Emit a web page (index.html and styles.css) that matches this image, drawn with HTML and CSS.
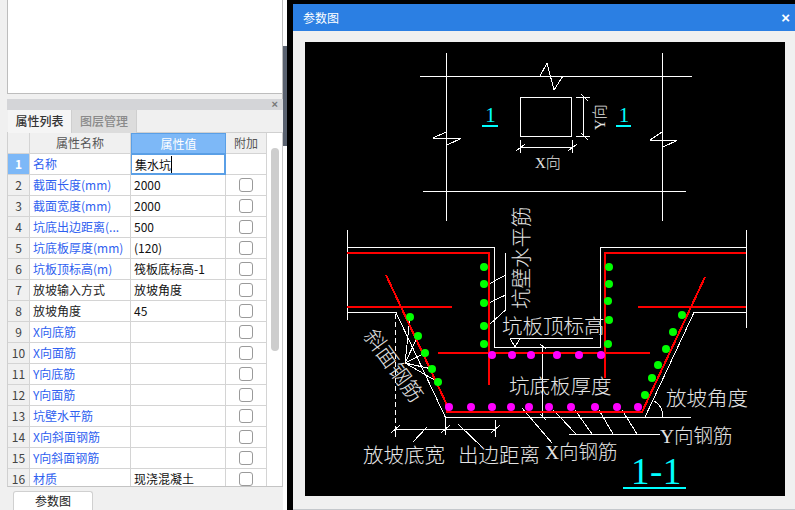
FILE: index.html
```html
<!DOCTYPE html>
<html lang="zh">
<head>
<meta charset="utf-8">
<title>参数图</title>
<link rel="stylesheet" href="styles.css">
</head>
<body>
<div class="app">
  <aside class="side">
    <div class="preview"></div>
    <section class="panel">
      <div class="panel-head"><span class="panel-close">×</span></div>
      <div class="tabs">
        <div class="tab tab-on">属性列表</div>
        <div class="tab tab-off">图层管理</div>
      </div>
      <div class="table-wrap">
        <div class="table">
          <div class="row head"><div class="c"></div><div class="c">属性名称</div><div class="c c-active">属性值</div><div class="c">附加</div></div>
          <div class="row row-sel"><div class="c num num-on">1</div><div class="c name">名称</div><div class="c val val-edit"><span class="caret">集水坑</span></div><div class="c"></div></div>
          <div class="row"><div class="c num">2</div><div class="c name">截面长度(mm)</div><div class="c val">2000</div><div class="c"><i class="chk"></i></div></div>
          <div class="row"><div class="c num">3</div><div class="c name">截面宽度(mm)</div><div class="c val">2000</div><div class="c"><i class="chk"></i></div></div>
          <div class="row"><div class="c num">4</div><div class="c name">坑底出边距离(...</div><div class="c val">500</div><div class="c"><i class="chk"></i></div></div>
          <div class="row"><div class="c num">5</div><div class="c name">坑底板厚度(mm)</div><div class="c val">(120)</div><div class="c"><i class="chk"></i></div></div>
          <div class="row"><div class="c num">6</div><div class="c name">坑板顶标高(m)</div><div class="c val">筏板底标高-1</div><div class="c"><i class="chk"></i></div></div>
          <div class="row"><div class="c num">7</div><div class="c name dark">放坡输入方式</div><div class="c val">放坡角度</div><div class="c"><i class="chk"></i></div></div>
          <div class="row"><div class="c num">8</div><div class="c name dark">放坡角度</div><div class="c val">45</div><div class="c"><i class="chk"></i></div></div>
          <div class="row"><div class="c num">9</div><div class="c name">X向底筋</div><div class="c val"></div><div class="c"><i class="chk"></i></div></div>
          <div class="row"><div class="c num">10</div><div class="c name">X向面筋</div><div class="c val"></div><div class="c"><i class="chk"></i></div></div>
          <div class="row"><div class="c num">11</div><div class="c name">Y向底筋</div><div class="c val"></div><div class="c"><i class="chk"></i></div></div>
          <div class="row"><div class="c num">12</div><div class="c name">Y向面筋</div><div class="c val"></div><div class="c"><i class="chk"></i></div></div>
          <div class="row"><div class="c num">13</div><div class="c name">坑壁水平筋</div><div class="c val"></div><div class="c"><i class="chk"></i></div></div>
          <div class="row"><div class="c num">14</div><div class="c name">X向斜面钢筋</div><div class="c val"></div><div class="c"><i class="chk"></i></div></div>
          <div class="row"><div class="c num">15</div><div class="c name">Y向斜面钢筋</div><div class="c val"></div><div class="c"><i class="chk"></i></div></div>
          <div class="row"><div class="c num">16</div><div class="c name">材质</div><div class="c val">现浇混凝土</div><div class="c"><i class="chk"></i></div></div>
        </div>
        <div class="scroll"><div class="thumb"></div></div>
      </div>
      <div class="foot"><div class="foot-tab">参数图</div></div>
    </section>
  </aside>
  <div class="splitter"><div class="splitter-thumb"></div></div>
  <main class="win">
    <header class="win-title"><span>参数图</span><span class="win-close">×</span></header>
    <div class="win-body">
      <svg class="drawing" viewBox="305 42 480 454" width="480" height="454" xmlns="http://www.w3.org/2000/svg">
        <g class="w">
          <path d="M420 76.500H692M423 191.500H686M446.500 53V221M662.500 53V221"/>
          <path d="M540 76L547 63L554 90L563 76"/>
          <path d="M433 138.500H461L447 145M446 132L433 138"/>
          <path d="M650 140.500H677L663 147M662 132L650 140"/>
          <path d="M520.500 97.500H571.500V136.500H520.500Z"/>
          <path d="M576 97.500H590M576 136.500H590M583.500 97V137M581 94L588 101M581 133L588 140"/>
          <path d="M520.500 140V153M572.500 140V153M520 147.500H572M516 151L525 144M568 151L577 144"/>
          <path d="M347.500 230V320M347 247.500H494.500V347.500H600.500V247.500H746M746.500 230V328"/>
          <path d="M347 312.500H396L445.500 417.500H691M645 417L694 312.500H746"/>
          <path class="dash" d="M395.500 314V430"/>
          <path d="M395.500 429V437M395 429.500H495M445.500 417V435M495.500 420V437M391 433L400 425M441 433L450 425M491 433L500 425"/>
          <path d="M413 442L427 427M458 424L483 448"/>
          <path d="M405 363L410 317M405 363L418 336M405 363L425 353M405 363L432 369M405 363L438 382"/>
          <path d="M505.500 253V310L489 325M505.500 275L489 284M505.500 295L489 303"/>
          <path d="M510 338.500H593M510 338.500L515 347L520 338.500"/>
          <path d="M542.500 347V417M540 344L546 349M540 414L546 420"/>
          <path d="M654 401Q663 406 663 417"/>
          <path d="M569 434.500H660M560 417L576 434M575 410L592 434M599 410L613 434M622 410L637 434"/>
          <path d="M522 408L552 443M553 410L570 427"/>
        </g>
        <g class="r">
          <path d="M347 253H489V385M746 253H605V378"/>
          <path d="M347 307H452M638 307H746M438 353H650"/>
          <path d="M386 275L446 403L447 412H642L705 277"/>
        </g>
        <g class="gd">
          <circle cx="484" cy="267" r="4"/><circle cx="484" cy="284" r="4"/><circle cx="484" cy="303" r="4"/><circle cx="484" cy="326" r="4"/><circle cx="484" cy="344" r="4"/>
          <circle cx="609" cy="267" r="4"/><circle cx="609" cy="284" r="4"/><circle cx="608" cy="301" r="4"/><circle cx="609" cy="320" r="4"/><circle cx="608" cy="344" r="4"/>
          <circle cx="410" cy="317" r="4"/><circle cx="418" cy="336" r="4"/><circle cx="425" cy="353" r="4"/><circle cx="432" cy="369" r="4"/><circle cx="438" cy="382" r="4"/>
          <circle cx="682" cy="315" r="4"/><circle cx="673" cy="332" r="4"/><circle cx="666" cy="349" r="4"/><circle cx="658" cy="365" r="4"/><circle cx="652" cy="378" r="4"/><circle cx="645" cy="395" r="4"/>
        </g>
        <g class="mg">
          <circle cx="492" cy="355" r="4"/><circle cx="512" cy="355" r="4"/><circle cx="531" cy="355" r="4"/><circle cx="557" cy="355" r="4"/><circle cx="579" cy="355" r="4"/><circle cx="601" cy="355" r="4"/>
          <circle cx="449" cy="407" r="4"/><circle cx="471" cy="407" r="4"/><circle cx="492" cy="407" r="4"/><circle cx="511" cy="407" r="4"/><circle cx="529" cy="407" r="4"/><circle cx="549" cy="407" r="4"/><circle cx="571" cy="407" r="4"/><circle cx="595" cy="407" r="4"/><circle cx="617" cy="407" r="4"/><circle cx="638" cy="407" r="4"/>
        </g>
        <g class="cy-line">
          <path d="M482 125.500H498M616 125.500H631"/>
          <path class="thick" d="M623 488H686"/>
        </g>
        <text class="t t1 cy" x="490.500" y="122" text-anchor="middle">1</text>
        <text class="t t1 cy" x="624" y="122" text-anchor="middle">1</text>
        <text class="t t-big cy" x="631" y="484">1-1</text>
        <text class="t t-sm" x="535" y="168">X向</text>
        <text class="t t-sm" transform="translate(605 130) rotate(-90)">Y向</text>
        <text class="t t-lg" transform="translate(529 309) rotate(-90)">坑壁水平筋</text>
        <text class="t t-lg" x="502" y="334">坑板顶标高</text>
        <text class="t t-lg" x="509" y="394">坑底板厚度</text>
        <text class="t t-lg" x="666" y="406">放坡角度</text>
        <text class="t t-md" x="660" y="443">Y向钢筋</text>
        <text class="t t-md" x="545" y="459">X向钢筋</text>
        <text class="t t-lg" x="363" y="463">放坡底宽</text>
        <text class="t t-lg" x="458" y="463">出边距离</text>
        <text class="t t-slant" transform="translate(363 336) rotate(54)">斜面钢筋</text>
      </svg>
    </div>
  </main>
</div>
</body>
</html>
```
FILE: styles.css
```css
* { box-sizing: border-box; }
html, body { margin: 0; padding: 0; }
body {
  width: 795px;
  height: 510px;
  overflow: hidden;
  background: #000;
  font: 12px "Noto Sans CJK SC", "Liberation Sans", sans-serif;
}
.app { display: flex; height: 510px; }

/* left side */
.side {
  width: 283px;
  flex: none;
  background: #f0f0f0;
  display: flex;
  flex-direction: column;
  padding-left: 7px;
  box-shadow: inset -1px 0 0 #b8b8b8;
}
.preview {
  height: 94px;
  flex: none;
  background: #fff;
  border: 1px solid #bdbdbd;
  border-top: 0;
}
.panel {
  flex: 1;
  margin-top: 5px;
  display: flex;
  flex-direction: column;
  min-height: 0;
}
.panel-head {
  height: 11px;
  flex: none;
  background: #d4d5d8;
  display: flex;
  justify-content: flex-end;
  align-items: center;
  padding-right: 5px;
}
.panel-close { color: #777; font: bold 11px/11px "Liberation Sans", sans-serif; }
.tabs { display: flex; height: 23px; flex: none; background: #f0f0f0; border-bottom: 1px solid #d0d0d0; padding-left: 1px; }
.tab {
  font-size: 12px;
  font-weight: 500;
  line-height: 22px;
  text-align: center;
  height: 23px;
}
.tab-on { width: 64px; color: #333; background: #f5f5f5; border-right: 1px solid #cfcfcf; }
.tab-off { width: 65px; color: #8a8a8a; background: #dcdcdc; border-right: 1px solid #cfcfcf; }
.table-wrap {
  height: 354px;
  flex: none;
  display: flex;
  overflow: hidden;
  background: #fff;
  border-bottom: 1px solid #c4c4c4;
  border-left: 1px solid #d0d0d0;
  border-right: 1px solid #c8c8c8;
}
.table { width: 259px; flex: none; }
.row {
  display: grid;
  grid-template-columns: 22px 101px 95px 41px;
  height: 21px;
}
.c {
  border-right: 1px solid #d4d4d4;
  border-bottom: 1px solid #d4d4d4;
  line-height: 20px;
  padding: 0 0 0 3px;
  color: #111;
  white-space: nowrap;
  overflow: hidden;
  display: block;
}
.head .c {
  background: #f0f0f0;
  color: #555;
  text-align: center;
  padding: 0;
  height: 21px;
}
.head .c-active {
  background: #7db8f7;
  color: #fff;
  border: 1px solid #5a9fe6;
}
.num {
  background: #f0f0f0;
  color: #444;
  text-align: center;
  padding: 0;
  font-size: 12px;
}
.num-on { background: #7db8f7; color: #fff; font-weight: 700; }
.name { color: #2f5ff0; padding-left: 3px; font-size: 12px; }
.dark { color: #222; }
.val { padding-left: 3px; }
.val-edit { border: 1px solid #5a9fe6; border-width: 1px 2px 2px 1px; line-height: 19px; }
.caret { border-right: 1px solid #000; }
.chk {
  display: block;
  width: 14px;
  height: 14px;
  margin: 3px 0 0 10px;
  background: #fff;
  border: 1px solid #9a9a9a;
  border-radius: 3px;
}
.scroll { flex: 1; background: #fff; padding: 15px 3px 0 4px; }
.thumb { height: 203px; background: #cdcdcd; border-radius: 4px; }
.foot { flex: 1; background: #f0f0f0; padding: 4px 0 0 6px; min-height: 0; }
.foot-tab {
  width: 80px;
  height: 19px;
  background: #fff;
  border: 1px solid #d0d0d0;
  border-bottom: 0;
  border-radius: 3px 3px 0 0;
  text-align: center;
  line-height: 18px;
  color: #222;
}

/* splitter */
.splitter { width: 4px; flex: none; background: #fff; padding-top: 46px; }
.splitter-thumb { height: 100px; background: #5a6270; }

/* window */
.win {
  width: 502px;
  flex: none;
  margin-left: 6px;
  margin-top: 4px;
  display: flex;
  flex-direction: column;
  height: 506px;
}
.win-title {
  height: 27px;
  flex: none;
  background: #2b7fe3;
  color: #fff;
  padding: 0 5px 0 10px;
  display: flex;
  justify-content: space-between;
  align-items: center;
  font-size: 12px;
}
.win-close { font: bold 15px/15px "Liberation Sans", sans-serif; }
.win-body {
  flex: 1;
  background: #f0f0f0;
  padding: 11px 10px 0 12px;
  border-bottom: 1px solid #c4c8cc;
}
.drawing { display: block; background: #000; }
.w { shape-rendering: crispEdges; }
.w path { fill: none; stroke: #fff; stroke-width: 1; }
.w .dash { stroke-dasharray: 5 3; }
.r { shape-rendering: crispEdges; }
.r path { fill: none; stroke: #f00; stroke-width: 2; }
.gd circle { fill: #0f0; }
.mg circle { fill: #f0f; }
.cy-line { shape-rendering: crispEdges; }
.cy-line path { fill: none; stroke: #0ff; stroke-width: 2; }
.cy-line .thick { stroke-width: 2; }
.t {
  font-family: "Liberation Serif", "Noto Sans CJK SC", serif;
  font-weight: 300;
  fill: #e4e4e4;
}
.t-lg { font-size: 20.5px; }
.t-md { font-size: 19.5px; }
.t-slant { font-size: 21px; }
.t-sm { font-size: 15px; }
.t1 { font-size: 21px; }
.t-big { font-size: 37px; letter-spacing: 0.5px; }
.cy { fill: #0ff; }
```
